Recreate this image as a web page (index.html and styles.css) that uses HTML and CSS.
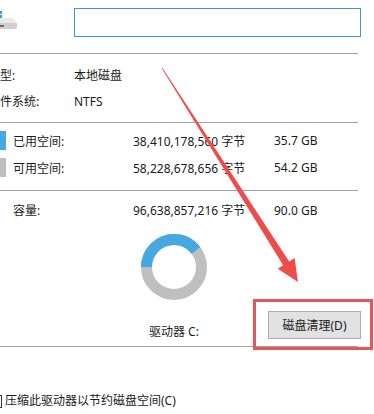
FILE: index.html
```html
<!DOCTYPE html>
<html lang="zh-CN">
<head>
  <meta charset="UTF-8" />
  <title>本地磁盘 (C:) 属性</title>
  <link rel="stylesheet" href="styles.css">
</head>
<body>
  <div class="panel">
    <div class="head">
      <svg class="drive-icon" width="18" height="37" viewBox="0 0 18 37">
        <rect x="0" y="11" width="2" height="3" fill="#2f9fe0" />
        <rect x="0" y="15" width="2" height="3" fill="#2f9fe0" />
        <polygon points="0,18 13,18 17,23 17,27 0,27" fill="#e9e9e9" />
        <polygon points="0,23 17,23 17,28 15,29 0,29" fill="#d0d0d0" />
        <rect x="0" y="25" width="4" height="2" fill="#6d6d6d" />
      </svg>
      <input class="name-box" type="text" />
    </div>
    <div class="sep"></div>

    <div class="info">
      <div class="info-row"><span class="label">类型:</span><span>本地磁盘</span></div>
      <div class="info-row"><span class="label">文件系统:</span><span>NTFS</span></div>
    </div>
    <div class="sep"></div>

    <div class="space">
      <div class="space-row">
        <span class="swatch used"></span>
        <span>已用空间:</span>
        <span>38,410,178,560 字节</span>
        <span>35.7 GB</span>
      </div>
      <div class="space-row">
        <span class="swatch free"></span>
        <span>可用空间:</span>
        <span>58,228,678,656 字节</span>
        <span>54.2 GB</span>
      </div>
    </div>
    <div class="sep"></div>

    <div class="capacity">
      <div class="space-row">
        <span></span>
        <span>容量:</span>
        <span>96,638,857,216 字节</span>
        <span>90.0 GB</span>
      </div>
    </div>

    <svg class="donut" width="66" height="66" viewBox="0 0 66 66">
      <circle cx="33" cy="33" r="27.5" fill="none" stroke="#bfbfbf" stroke-width="11" />
      <circle cx="33" cy="33" r="27.5" fill="none" stroke="#45a8e0" stroke-width="11"
              stroke-dasharray="68.5 200" transform="rotate(180 33 33)" />
    </svg>

    <div class="drive-row">
      <span class="drive-label">驱动器 C:</span>
      <button class="clean-btn">磁盘清理(D)</button>
    </div>
    <div class="sep"></div>

    <div class="compress">
      <span class="check"></span>
      <span>压缩此驱动器以节约磁盘空间(C)</span>
    </div>
  </div>

  <!-- annotation overlay -->
  <div class="mark-box"></div>
  <svg class="arrow" width="374" height="414" viewBox="0 0 374 414">
    <polygon points="162.3,67.8 289.2,261.5 294.6,258 298,282 277.8,268.8 283.2,265.3 161.7,68.2" fill="#ef4b4b" />
  </svg>
</body>
</html>
```

FILE: styles.css
```css
* { box-sizing: border-box; }
html, body {
  margin: 0;
  padding: 0;
  background: #fff;
  overflow: hidden;
}
body {
  width: 374px;
  height: 414px;
  position: relative;
  font-family: "Noto Sans", "Noto Sans CJK SC", sans-serif;
  font-size: 12px;
  color: #1a1a1a;
}
.head {
  height: 53px;
  display: flex;
  align-items: flex-start;
}
.drive-icon {
  display: block;
  flex: none;
}
.name-box {
  margin: 8px 0 0 56px;
  width: 287px;
  height: 29px;
  border: 1px solid #4a94cc;
  padding: 0 4px;
  outline: none;
  background: #fff;
}
.sep {
  width: 358px;
  height: 1px;
  background: #a3a3a3;
}
.info {
  padding: 8px 0;
}
.info-row {
  height: 26px;
  display: flex;
  align-items: center;
  margin-left: -12px;
}
.info-row .label {
  width: 86px;
}
.space {
  padding: 4px 0 9px;
}
.space-row {
  height: 27px;
  display: grid;
  grid-template-columns: 13px 120px 141px auto;
  align-items: center;
}
.swatch {
  display: block;
  width: 6px;
  height: 19px;
}
.swatch.used { background: #45a8e0; }
.swatch.free { background: #bfbfbf; }
.capacity {
  padding-top: 6px;
}
.capacity .space-row {
  height: 26px;
}
.donut {
  display: block;
  margin: 11px 0 0 141px;
}
.drive-row {
  height: 46px;
  display: flex;
  align-items: flex-start;
}
.drive-label {
  margin: 24px 0 0 149px;
  line-height: 16px;
}
.clean-btn {
  margin: 11px 13px 0 auto;
  width: 93px;
  height: 28px;
  background: #e1e1e1;
  border: 1px solid #adadad;
  font: inherit;
  color: #1a1a1a;
  padding: 0;
}
.compress {
  margin-top: 46px;
  display: flex;
  align-items: center;
  gap: 3px;
  line-height: 16px;
}
.check {
  width: 13px;
  height: 13px;
  margin-left: -11px;
  border: 1px solid #333;
}
.mark-box {
  position: absolute;
  left: 253px;
  top: 299px;
  width: 120px;
  height: 51px;
  border: 3px solid #e85656;
}
.arrow {
  position: absolute;
  left: 0;
  top: 0;
  pointer-events: none;
}
```
